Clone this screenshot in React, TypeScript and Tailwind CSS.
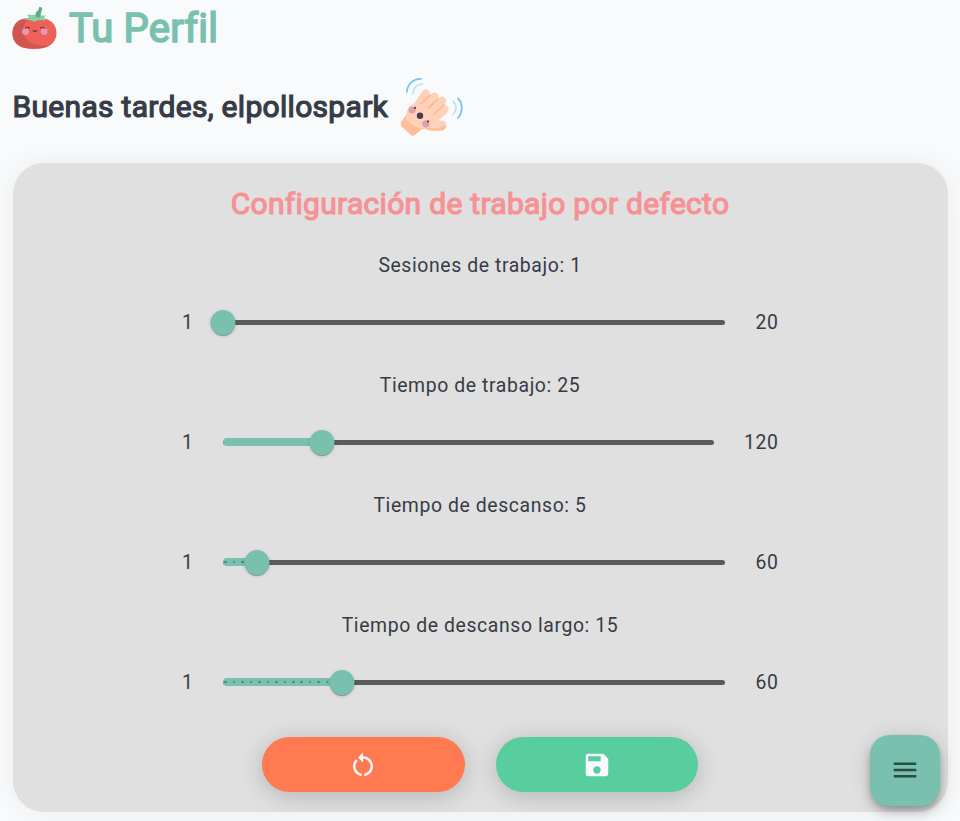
import { MdMenu, MdRestartAlt, MdSave } from "react-icons/md";

type Setting = { label: string; value: number; max: number; dots: number };

const settings: Setting[] = [
  { label: "Sesiones de trabajo", value: 1, max: 20, dots: 0 },
  { label: "Tiempo de trabajo", value: 25, max: 120, dots: 0 },
  { label: "Tiempo de descanso", value: 5, max: 60, dots: 4 },
  { label: "Tiempo de descanso largo", value: 15, max: 60, dots: 14 },
];

function Tomato() {
  return (
    <svg className="-mt-[2px] -ml-[1px] h-[45px] w-[45px] shrink-0" viewBox="0 0 45 45">
      <path d="M22.3 14C9 11 0.5 18 .5 28.5C.5 37 7 42.8 15 43.2C19 44 25 44 30 43.2C39 42 44.5 36 44.5 28C44.5 18 36 11 22.3 14Z" fill="#ee6158" />
      <path d="M15 13.5C5 14 .5 20 .5 28.5C.5 37 7 42.8 15 43.2C20 44 26 44 31 43Q34 42.3 36 40.5C25 41 11.5 38 11.5 26C11.5 21 13 16 18 13.5Z" fill="#d25650" />
      <path d="M12 14.5L17 12.2L15 9.5L21 10L25 9L29 10.5L34 10.5L32 12.5L34 15.5L27 15L22 16.8L18 15Z" fill="#87d1a1" />
      <path d="M24.5 12L24 8Q24.5 6.5 26.5 5.5L27.5 2L30 3L28.8 7.5L28 12Z" fill="#5fa981" stroke="#5fa981" strokeWidth=".6" />
      <circle cx="13.5" cy="26.5" r="3.4" fill="#ef91b4" />
      <circle cx="32.2" cy="26.5" r="3.4" fill="#ef91b4" />
      <g fill="none" stroke="#553c40" strokeWidth="1.1" strokeLinecap="round">
        <path d="M13.5 23.2Q15.5 21.3 17.5 23.2M28.5 23.2Q30.5 21.3 32.5 23.2M21 25.3Q22.9 27.5 24.8 25.3" />
      </g>
    </svg>
  );
}

function WavingHand() {
  return (
    <svg className="mt-[4px] h-[64px] w-[64px] shrink-0" viewBox="0 0 64 64">
      <path d="M7 37L1 45Q0 48 2 50L11 58Q13 60 16 57L22 52L40 53Q46 52 46 48L30 38Z" fill="#ffbd99" />
      <path d="M6 42C6 30 11 29 15 25L22 15Q24 11 28 13Q31 15 29 19Q34 13 38 17Q40 19 37 23Q41 17 45 21Q48 24 43 29Q46 27 48 30Q50 33 46 37L38 43.5H42.7Q46 44 46 48Q46 52 41 53L25 52C16 51 8 46 6 42Z" fill="#ffd1ba" />
      <path d="M25 50.5Q39 52.5 46 48Q46 53.7 41 53.7H29Z" fill="#ffbd99" />
      <path d="M21 27L30 18M28 31L38 22M34 37L44 28" stroke="#ffb58d" strokeWidth="1.6" strokeLinecap="round" />
      <circle cx="12" cy="33" r="3.6" fill="#dfa0aa" />
      <circle cx="25.8" cy="46.8" r="3.6" fill="#dfa0aa" />
      <circle cx="20" cy="38.8" r="3.2" fill="#414149" />
      <path d="M14 31.2L15.3 30V31.7Z" fill="#414149" stroke="#414149" />
      <path d="M27 44.7L28.3 43.5V45.2Z" fill="#414149" stroke="#414149" />
      <g fill="none" strokeWidth="1.7" strokeLinecap="round">
        <path d="M6.8 15C7.5 7 13 1.8 21 1.8M58 21.5C63 26 63 35 58 41" stroke="#70c6ef" />
        <path d="M12.7 17C13.5 11 17 7 22.5 7M53 24.5C57 28 57 33 53 37.5" stroke="#c2e3f7" />
      </g>
    </svg>
  );
}

function Slider({ label, value, max, dots }: Setting) {
  const percent = `${((value - 1) / (max - 1)) * 100}%`;
  return (
    <div className="h-[120px] text-center">
      <p className="h-[30px] pt-px leading-[30px]">{label}: {value}</p>
      <div className="mx-auto mt-[12px] flex h-[60px] w-[596px] items-center justify-between">
        <span className="w-[11px] pt-[2px]">1</span>
        <div className="relative mr-[30.4px] ml-[30px] h-[7.5px] grow">
          <div className="absolute top-[1.25px] h-[5px] w-full rounded-full bg-[#5b5b5b]" />
          <div className="absolute top-0 h-[7.5px] overflow-hidden rounded-full bg-[#79c1ae]" style={{ width: percent }}>
            {Array.from({ length: dots }, (_, i) => (
              <i key={i} className="absolute top-[2.5px] h-[2.5px] w-[2.5px] rounded-full bg-[#47897a]" style={{ left: 1.25 + i * 8.47 }} />
            ))}
          </div>
          <div className="absolute top-[-8.75px] h-[25px] w-[25px] -translate-x-1/2 rounded-full bg-[#79c1ae] shadow-[0_2px_1px_-1px_rgba(0,0,0,0.2),0_1px_1px_rgba(0,0,0,0.14),0_1px_4px_rgba(0,0,0,0.12)]" style={{ left: percent }} />
        </div>
        <span className="-mr-[0.6px] pt-[2px]">{max}</span>
      </div>
    </div>
  );
}

export default function App() {
  return (
    <div className="relative h-[821px] overflow-hidden bg-[#f8fafc] px-[12.5px] font-['Roboto',sans-serif] text-[19.4px] tracking-[0.6px] text-[#363c46]">
      <header className="flex h-[56px] items-center gap-[12.5px]">
        <Tomato />
        <h1 className="pt-[2px] text-[40px] leading-[56px] font-normal tracking-[0.2px] text-[#79c1ae] [-webkit-text-stroke:1.6px_#79c1ae]">Tu Perfil</h1>
      </header>
      <section className="mt-[21px] flex h-[60px] items-center gap-[12px]">
        <h2 className="text-[30px] leading-[40px] font-normal tracking-[0.3px] [-webkit-text-stroke:1.2px_#363c46]">Buenas tardes, elpollospark</h2>
        <WavingHand />
      </section>
      <main className="mt-[26px] h-[649px] overflow-hidden rounded-[31px] bg-[#e0e0e0] pt-[20px] shadow-[0_0_31px_rgba(0,0,0,0.06)]">
        <h2 className="h-[42px] text-center text-[30px] leading-[42px] font-normal tracking-[0.3px] text-[#f69296] [-webkit-text-stroke:1.2px_#f69296]">Configuración de trabajo por defecto</h2>
        <div className="mt-[25px]">
          {settings.map((setting) => <Slider key={setting.label} {...setting} />)}
        </div>
        <div className="mt-[7.4px] flex justify-center gap-[31px] text-[#f8fafc]">
          <button aria-label="Restablecer" className="flex h-[55px] w-[202.5px] items-center justify-center rounded-full bg-[#ff7a51] shadow-[0_4px_24px_rgba(0,0,0,0.2)]"><MdRestartAlt size={30} /></button>
          <button aria-label="Guardar" className="flex h-[55px] w-[202.5px] items-center justify-center rounded-full bg-[#58ce9e] shadow-[0_4px_24px_rgba(0,0,0,0.2)]"><MdSave size={30} /></button>
        </div>
      </main>
      <button aria-label="Menú" className="absolute top-[735px] left-[870px] flex h-[70.5px] w-[70px] items-center justify-center rounded-[20px] bg-[#79c1ae] text-[#294c43] shadow-[0_4px_6px_-1px_rgba(0,0,0,0.2),0_7px_12px_rgba(0,0,0,0.14),0_1px_22px_rgba(0,0,0,0.12)]"><MdMenu size={30} /></button>
    </div>
  );
}
